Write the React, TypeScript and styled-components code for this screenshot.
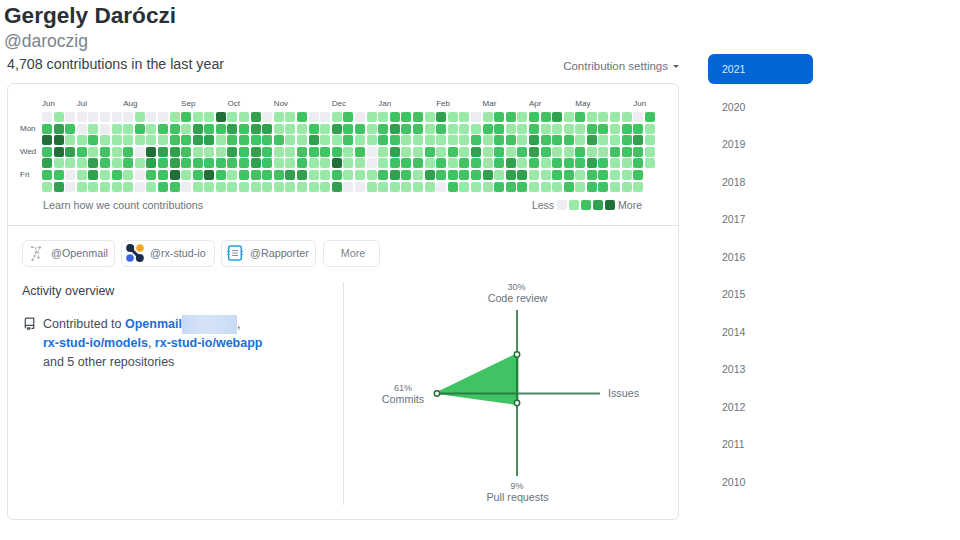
import React from 'react';
import styled, { createGlobalStyle } from 'styled-components';

const Global = createGlobalStyle`
  html, body { margin: 0; padding: 0; background: #fff; }
  body { font-family: "Liberation Sans", Arial, sans-serif; color: #24292e; }
`;

const Page = styled.div`
  display: flex;
  width: 960px;
  height: 540px;
  overflow: hidden;
`;
const Main = styled.main`
  width: 679px;
  flex: none;
`;
const Name = styled.h1`
  margin: 0 0 0 4px;
  font-size: 22.6px;
  line-height: 32px;
  font-weight: 700;
  color: #2b3036;
`;
const Handle = styled.div`
  margin-left: 4px;
  font-size: 17.5px;
  line-height: 18px;
  color: #7b838b;
`;
const HeadRow = styled.div`
  display: flex;
  justify-content: space-between;
  align-items: center;
  margin: 5px 0 10px 7px;
  height: 18px;
`;
const Count = styled.h2`
  margin: 0;
  font-size: 14.25px;
  font-weight: 400;
  line-height: 18px;
  color: #3a4047;
`;
const Settings = styled.div`
  display: flex;
  align-items: center;
  gap: 5px;
  padding-top: 4px;
  font-size: 11.5px;
  color: #6a737d;
`;
const Caret = styled.span`
  width: 0;
  height: 0;
  border: 3.5px solid transparent;
  border-top-color: #586069;
  border-bottom-width: 0;
`;
const Card = styled.section`
  margin-left: 7px;
  height: 437px;
  box-sizing: border-box;
  border: 1px solid #e1e4e8;
  border-radius: 6px;
`;
const CalendarSection = styled.div`
  height: 142px;
  box-sizing: border-box;
  padding: 14px 0 0 12px;
  border-bottom: 1px solid #e1e4e8;
`;
const Calendar = styled.div`
  display: grid;
  grid-template-columns: 20.4px repeat(53, 10px);
  grid-template-rows: 12.2px repeat(7, 10px);
  column-gap: 1.6px;
  row-gap: 1.67px;
`;
const Month = styled.div<{ $col: number }>`
  grid-row: 1;
  grid-column: ${p => p.$col + 2} / span 4;
  font-size: 8px;
  line-height: 11px;
  color: #4d555d;
`;
const Day = styled.div<{ $row: number }>`
  grid-column: 1;
  grid-row: ${p => p.$row + 2};
  font-size: 8px;
  line-height: 10px;
  color: #4d555d;
`;
const levels = ['#ebedf0', '#9be9a8', '#40c463', '#30a14e', '#216e39'];
const Cell = styled.div<{ $c: number; $r: number; $l: number }>`
  grid-column: ${p => p.$c + 2};
  grid-row: ${p => p.$r + 2};
  border-radius: 2px;
  background: ${p => levels[p.$l]};
`;
const CalFooter = styled.div`
  display: flex;
  justify-content: space-between;
  align-items: center;
  height: 14px;
  margin: 6px 35px 0 23px;
  font-size: 10.75px;
  color: #6a737d;
`;
const LearnLink = styled.span``;
const Legend = styled.div`
  display: flex;
  align-items: center;
  gap: 2px;
  font-size: 10.5px;
`;
const Swatch = styled.span<{ $l: number }>`
  width: 10px;
  height: 10px;
  border-radius: 2px;
  background: ${p => levels[p.$l]};
`;
const LegendWord = styled.span`
  margin: 0 1px;
`;
const OrgRow = styled.div`
  display: flex;
  gap: 6px;
  padding: 14px 0 0 14px;
  height: 27px;
`;
const OrgButton = styled.div<{ $w: number }>`
  display: flex;
  align-items: center;
  gap: 5px;
  width: ${p => p.$w}px;
  box-sizing: border-box;
  height: 27px;
  padding: 0 0 1px 3px;
  border: 1px solid #e6e9ec;
  border-radius: 6px;
  font-size: 10.75px;
  color: #6a737d;
  white-space: nowrap;
`;
const MoreButton = styled.div`
  display: flex;
  align-items: center;
  justify-content: center;
  width: 57px;
  height: 27px;
  box-sizing: border-box;
  margin-left: 1px;
  padding: 0 0 1px 3px;
  border: 1px solid #e6e9ec;
  border-radius: 6px;
  font-size: 10.75px;
  color: #7b838b;
`;
const Overview = styled.div`
  display: flex;
  margin-top: 15px;
  height: 223px;
`;
const Activity = styled.div`
  width: 336px;
  flex: none;
  box-sizing: border-box;
  padding-left: 14px;
  border-right: 1px solid #e1e4e8;
`;
const ActivityTitle = styled.h2`
  margin: 0;
  font-size: 12.5px;
  font-weight: 400;
  line-height: 18px;
  color: #3a4047;
`;
const Contributed = styled.div`
  display: flex;
  gap: 7px;
  margin-top: 15px;
`;
const Lines = styled.div`
  font-size: 12.5px;
  line-height: 19px;
  color: #444d56;
  white-space: nowrap;
`;
const RepoLink = styled.a`
  color: #1a6fd8;
  font-weight: 700;
`;
const Redacted = styled.span`
  display: inline-block;
  width: 55px;
  height: 19px;
  vertical-align: top;
  background: linear-gradient(90deg, #c6d9f6, #d6e3f7 40%, #c9dcf5);
`;
const RepoIcon = styled.svg`
  margin: 2px 0 0 1px;
  flex: none;
`;
const ChartWrap = styled.div`
  flex: 1;
  margin-left: -1px;
`;
const ChartSvg = styled.svg`
  display: block;
  font-family: "Liberation Sans", Arial, sans-serif;
`;
const Side = styled.nav`
  width: 105px;
  margin-left: 29px;
  padding-top: 54px;
  flex: none;
  display: flex;
  flex-direction: column;
  gap: 7.5px;
`;
const Year = styled.div<{ $active?: boolean }>`
  height: 30px;
  line-height: 30px;
  padding-left: 14px;
  border-radius: 6px;
  font-size: 10.5px;
  color: ${p => (p.$active ? '#dbe9fb' : '#6a737d')};
  background: ${p => (p.$active ? '#0366d6' : 'transparent')};
`;

const grid = [
  [0,1,0,0,0,0,0,0,1,0,0,1,2,1,1,4,1,1,3,0,1,1,2,0,0,1,2,0,1,1,2,2,2,1,3,1,1,0,1,2,2,1,2,2,3,1,2,1,1,1,1,0,2],
  [2,3,2,0,1,0,1,1,2,1,2,2,1,3,2,2,3,2,3,3,1,1,1,2,1,3,2,2,1,2,3,2,2,1,2,1,1,1,2,2,1,1,2,1,1,1,1,2,2,1,2,2,1],
  [4,4,1,1,2,1,1,1,1,1,1,2,2,3,3,1,2,2,2,2,2,1,1,3,1,1,2,1,1,2,2,1,1,1,1,1,1,2,1,2,2,1,3,2,2,2,1,3,1,1,2,3,1],
  [2,4,3,2,1,2,1,2,0,4,3,3,2,1,1,1,3,2,3,2,1,1,2,2,2,2,1,2,0,1,3,1,1,2,1,2,1,3,1,2,1,2,3,2,1,1,2,1,1,2,2,2,1],
  [3,1,1,1,3,2,1,2,1,3,2,3,2,2,2,2,2,2,3,2,1,1,2,1,1,4,1,1,0,1,2,2,2,1,2,1,2,2,1,2,3,1,2,1,2,2,2,3,2,1,1,2,1],
  [2,2,0,1,3,1,2,1,0,2,2,4,1,2,4,2,1,2,2,2,2,3,3,1,1,2,1,1,1,2,3,2,1,3,2,2,2,2,3,1,3,3,1,1,2,2,1,2,2,1,1,2],
  [1,3,0,1,1,1,1,1,0,1,2,2,0,1,1,1,1,1,1,1,1,1,1,1,1,3,0,0,1,1,1,1,1,1,0,2,1,1,1,2,2,2,1,1,1,2,1,2,2,1,1,1],
];
const months: [string, number][] = [
  ['Jun', 0], ['Jul', 3], ['Aug', 7], ['Sep', 12], ['Oct', 16], ['Nov', 20], ['Dec', 25],
  ['Jan', 29], ['Feb', 34], ['Mar', 38], ['Apr', 42], ['May', 46], ['Jun', 51],
];
const years = ['2021','2020','2019','2018','2017','2016','2015','2014','2013','2012','2011','2010'];

const OpenmailLogo = () => (
  <svg width="20" height="20" viewBox="0 0 20 20" fill="none" stroke="#a8a8a8" strokeWidth="0.6">
    <path d="M6 4l3.5 1L14 4M9.5 5l1 4-2 4-2 4M13.5 5l-1.5 5 .5 4M8.5 9.5h4" />
    <circle cx="6" cy="4" r="0.8" fill="#888" />
    <circle cx="14" cy="4.5" r="0.8" fill="#888" />
    <circle cx="10.5" cy="9" r="0.7" fill="#888" />
    <circle cx="6.5" cy="17" r="0.8" fill="#888" />
    <circle cx="12.5" cy="14.5" r="0.8" fill="#888" />
    <circle cx="8.5" cy="13" r="0.7" fill="#888" />
  </svg>
);
const RxLogo = () => (
  <svg width="20" height="20" viewBox="0 0 20 20">
    <path d="M5 5L15 15" stroke="#1c2b4a" strokeWidth="3" />
    <circle cx="5.2" cy="5" r="4" fill="#1c2b4a" />
    <circle cx="14.8" cy="15" r="4" fill="#1c2b4a" />
    <circle cx="15" cy="5" r="3.8" fill="#f5a623" />
    <circle cx="5" cy="15" r="3.8" fill="#3d63ea" />
  </svg>
);
const RapporterLogo = () => (
  <svg width="20" height="20" viewBox="0 0 20 20" fill="none">
    <rect x="3.7" y="3" width="12.6" height="14" rx="2" stroke="#2b9fd8" strokeWidth="1.6" />
    <path d="M2 8.5h1.5M2 11.5h1.5M16.5 8.5H18M16.5 11.5H18" stroke="#2b9fd8" strokeWidth="1.2" />
    <path d="M7 7.5h6M7 10h6M7 12.5h6" stroke="#8a9299" strokeWidth="1" />
  </svg>
);

const Radar = () => (
  <ChartSvg width="335" height="224" viewBox="343 282 335 224">
    <path d="M517.5 354L437 393L517.5 404Z" fill="#40c463" stroke="#40c463" strokeWidth="2" />
    <path d="M517 310V476M437 393.5H600" stroke="#216e39" strokeWidth="2" opacity="0.8" />
    <circle cx="517" cy="354.5" r="2.7" fill="#fff" stroke="#216e39" strokeWidth="1.5" />
    <circle cx="437" cy="393.5" r="2.7" fill="#fff" stroke="#216e39" strokeWidth="1.5" />
    <circle cx="517" cy="403" r="2.7" fill="#fff" stroke="#216e39" strokeWidth="1.5" />
    <g fill="#6a737d" textAnchor="middle">
      <text x="516.5" y="290" fontSize="9">30%</text>
      <text x="517.5" y="302" fontSize="10.75">Code review</text>
      <text x="403" y="391" fontSize="9">61%</text>
      <text x="403" y="403" fontSize="10.75">Commits</text>
      <text x="623.5" y="397" fontSize="10.75">Issues</text>
      <text x="517" y="489" fontSize="9">9%</text>
      <text x="517.5" y="501" fontSize="10.75">Pull requests</text>
    </g>
  </ChartSvg>
);

export default function App() {
  return (
    <Page>
      <Global />
      <Main>
        <Name>Gergely Daróczi</Name>
        <Handle>@daroczig</Handle>
        <HeadRow>
          <Count>4,708 contributions in the last year</Count>
          <Settings>Contribution settings<Caret /></Settings>
        </HeadRow>
        <Card>
          <CalendarSection>
            <Calendar>
              {months.map(([m, c]) => <Month key={m + c} $col={c}>{m}</Month>)}
              <Day $row={1}>Mon</Day>
              <Day $row={3}>Wed</Day>
              <Day $row={5}>Fri</Day>
              {grid.map((row, r) => row.map((l, c) => <Cell key={r + '-' + c} $r={r} $c={c} $l={l} />))}
            </Calendar>
            <CalFooter>
              <LearnLink>Learn how we count contributions</LearnLink>
              <Legend>
                <LegendWord>Less</LegendWord>
                {[0, 1, 2, 3, 4].map(l => <Swatch key={l} $l={l} />)}
                <LegendWord>More</LegendWord>
              </Legend>
            </CalFooter>
          </CalendarSection>
          <OrgRow>
            <OrgButton $w={93}><OpenmailLogo />@Openmail</OrgButton>
            <OrgButton $w={94}><RxLogo />@rx-stud-io</OrgButton>
            <OrgButton $w={95}><RapporterLogo />@Rapporter</OrgButton>
            <MoreButton>More</MoreButton>
          </OrgRow>
          <Overview>
            <Activity>
              <ActivityTitle>Activity overview</ActivityTitle>
              <Contributed>
                <RepoIcon width="13" height="14" viewBox="0 0 16 16" fill="#444d56">
                  <path d="M2 2.5A2.5 2.5 0 014.5 0h8.75a.75.75 0 01.75.75v12.5a.75.75 0 01-.75.75h-2.5a.75.75 0 110-1.5h1.75v-2h-8a1 1 0 00-.714 1.7.75.75 0 01-1.072 1.05A2.495 2.495 0 012 11.5v-9zm10.5-1h-8a1 1 0 00-1 1v6.708A2.486 2.486 0 014.5 9h8V1.5zM5 12.25v3.25a.25.25 0 00.4.2l1.45-1.087a.25.25 0 01.3 0L8.6 15.7a.25.25 0 00.4-.2v-3.25a.25.25 0 00-.25-.25h-3.5a.25.25 0 00-.25.25z" />
                </RepoIcon>
                <Lines>
                  Contributed to <RepoLink>Openmail</RepoLink><Redacted />,<br />
                  <RepoLink>rx-stud-io/models</RepoLink>, <RepoLink>rx-stud-io/webapp</RepoLink><br />
                  and 5 other repositories
                </Lines>
              </Contributed>
            </Activity>
            <ChartWrap><Radar /></ChartWrap>
          </Overview>
        </Card>
      </Main>
      <Side>
        {years.map((y, i) => <Year key={y} $active={i === 0}>{y}</Year>)}
      </Side>
    </Page>
  );
}
